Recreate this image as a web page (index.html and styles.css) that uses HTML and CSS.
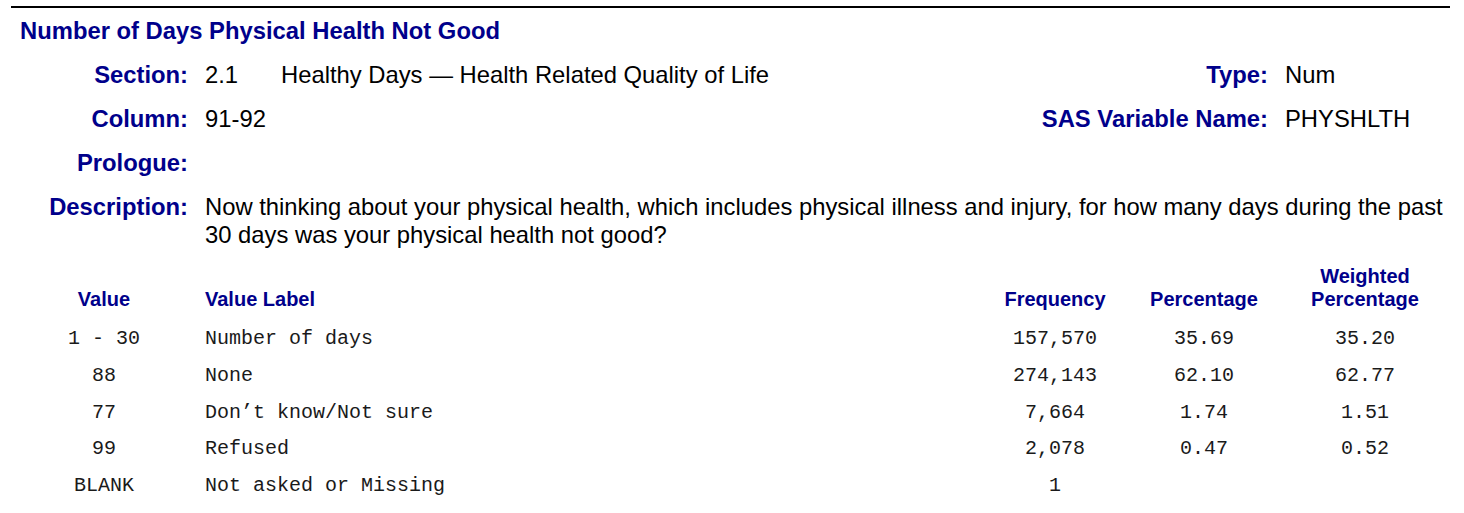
FILE: index.html
```html
<!DOCTYPE html>
<html lang="en">
<head>
<meta charset="utf-8">
<title>PHYSHLTH</title>
<link rel="stylesheet" href="styles.css">
</head>
<body>
<div class="page">
  <div class="rule"></div>
  <div class="content">
    <h1 class="title">Number of Days Physical Health Not Good</h1>

    <div class="info">
      <div class="lbl">Section:</div>
      <div class="val"><span class="secnum">2.1</span>Healthy Days — Health Related Quality of Life</div>
      <div class="lbl rlbl">Type:</div>
      <div class="val">Num</div>

      <div class="lbl">Column:</div>
      <div class="val">91-92</div>
      <div class="lbl rlbl">SAS Variable Name:</div>
      <div class="val">PHYSHLTH</div>

      <div class="lbl">Prologue:</div>
      <div class="val span3"></div>

      <div class="lbl">Description:</div>
      <div class="val span3 desc">Now thinking about your physical health, which includes physical illness and injury, for how many days during the past 30 days was your physical health not good?</div>
    </div>

    <div class="table">
      <div class="th c">Value</div>
      <div class="th l">Value Label</div>
      <div class="th c">Frequency</div>
      <div class="th c">Percentage</div>
      <div class="th c">Weighted<br>Percentage</div>

      <div class="td c">1 - 30</div>
      <div class="td l">Number of days</div>
      <div class="td c">157,570</div>
      <div class="td c">35.69</div>
      <div class="td c">35.20</div>

      <div class="td c">88</div>
      <div class="td l">None</div>
      <div class="td c">274,143</div>
      <div class="td c">62.10</div>
      <div class="td c">62.77</div>

      <div class="td c">77</div>
      <div class="td l">Don’t know/Not sure</div>
      <div class="td c">7,664</div>
      <div class="td c">1.74</div>
      <div class="td c">1.51</div>

      <div class="td c">99</div>
      <div class="td l">Refused</div>
      <div class="td c">2,078</div>
      <div class="td c">0.47</div>
      <div class="td c">0.52</div>

      <div class="td c">BLANK</div>
      <div class="td l">Not asked or Missing</div>
      <div class="td c">1</div>
      <div class="td c"></div>
      <div class="td c"></div>
    </div>
  </div>
</div>
</body>
</html>
```

FILE: styles.css
```css
html, body {
  margin: 0;
  padding: 0;
  background: #ffffff;
}

body {
  font-family: "Liberation Sans", Arial, sans-serif;
  color: #000000;
}

.page {
  padding: 6px 14px 0 11px;
}

.rule {
  height: 0;
  border-top: 2px solid #000000;
}

.content {
  padding-left: 9px;
}

.title {
  margin: 9px 0 0 0;
  font-size: 23.8px;
  line-height: 28px;
  font-weight: bold;
  color: #00008b;
}

.info {
  display: grid;
  grid-template-columns: 168px 1fr auto 182px;
  row-gap: 16px;
  margin-top: 16px;
  font-size: 23.8px;
  line-height: 28px;
}

.lbl {
  font-weight: bold;
  color: #00008b;
  text-align: right;
  white-space: nowrap;
}

.val {
  padding-left: 17px;
  min-height: 28px;
}

.span3 {
  grid-column: 2 / 5;
}

.secnum {
  display: inline-block;
  width: 76px;
}

.table {
  display: grid;
  grid-template-columns: 168px 792px 150px 148px 174px;
  margin-top: 16px;
}

.th {
  font-size: 20px;
  line-height: 23px;
  font-weight: bold;
  color: #00008b;
  align-self: end;
  padding-bottom: 10px;
}

.td {
  font-family: "Liberation Mono", "Courier New", monospace;
  font-size: 20px;
  line-height: 36.75px;
  color: #1a1a1a;
  white-space: pre;
}

.c {
  text-align: center;
}

.l {
  text-align: left;
  padding-left: 17px;
}
```
